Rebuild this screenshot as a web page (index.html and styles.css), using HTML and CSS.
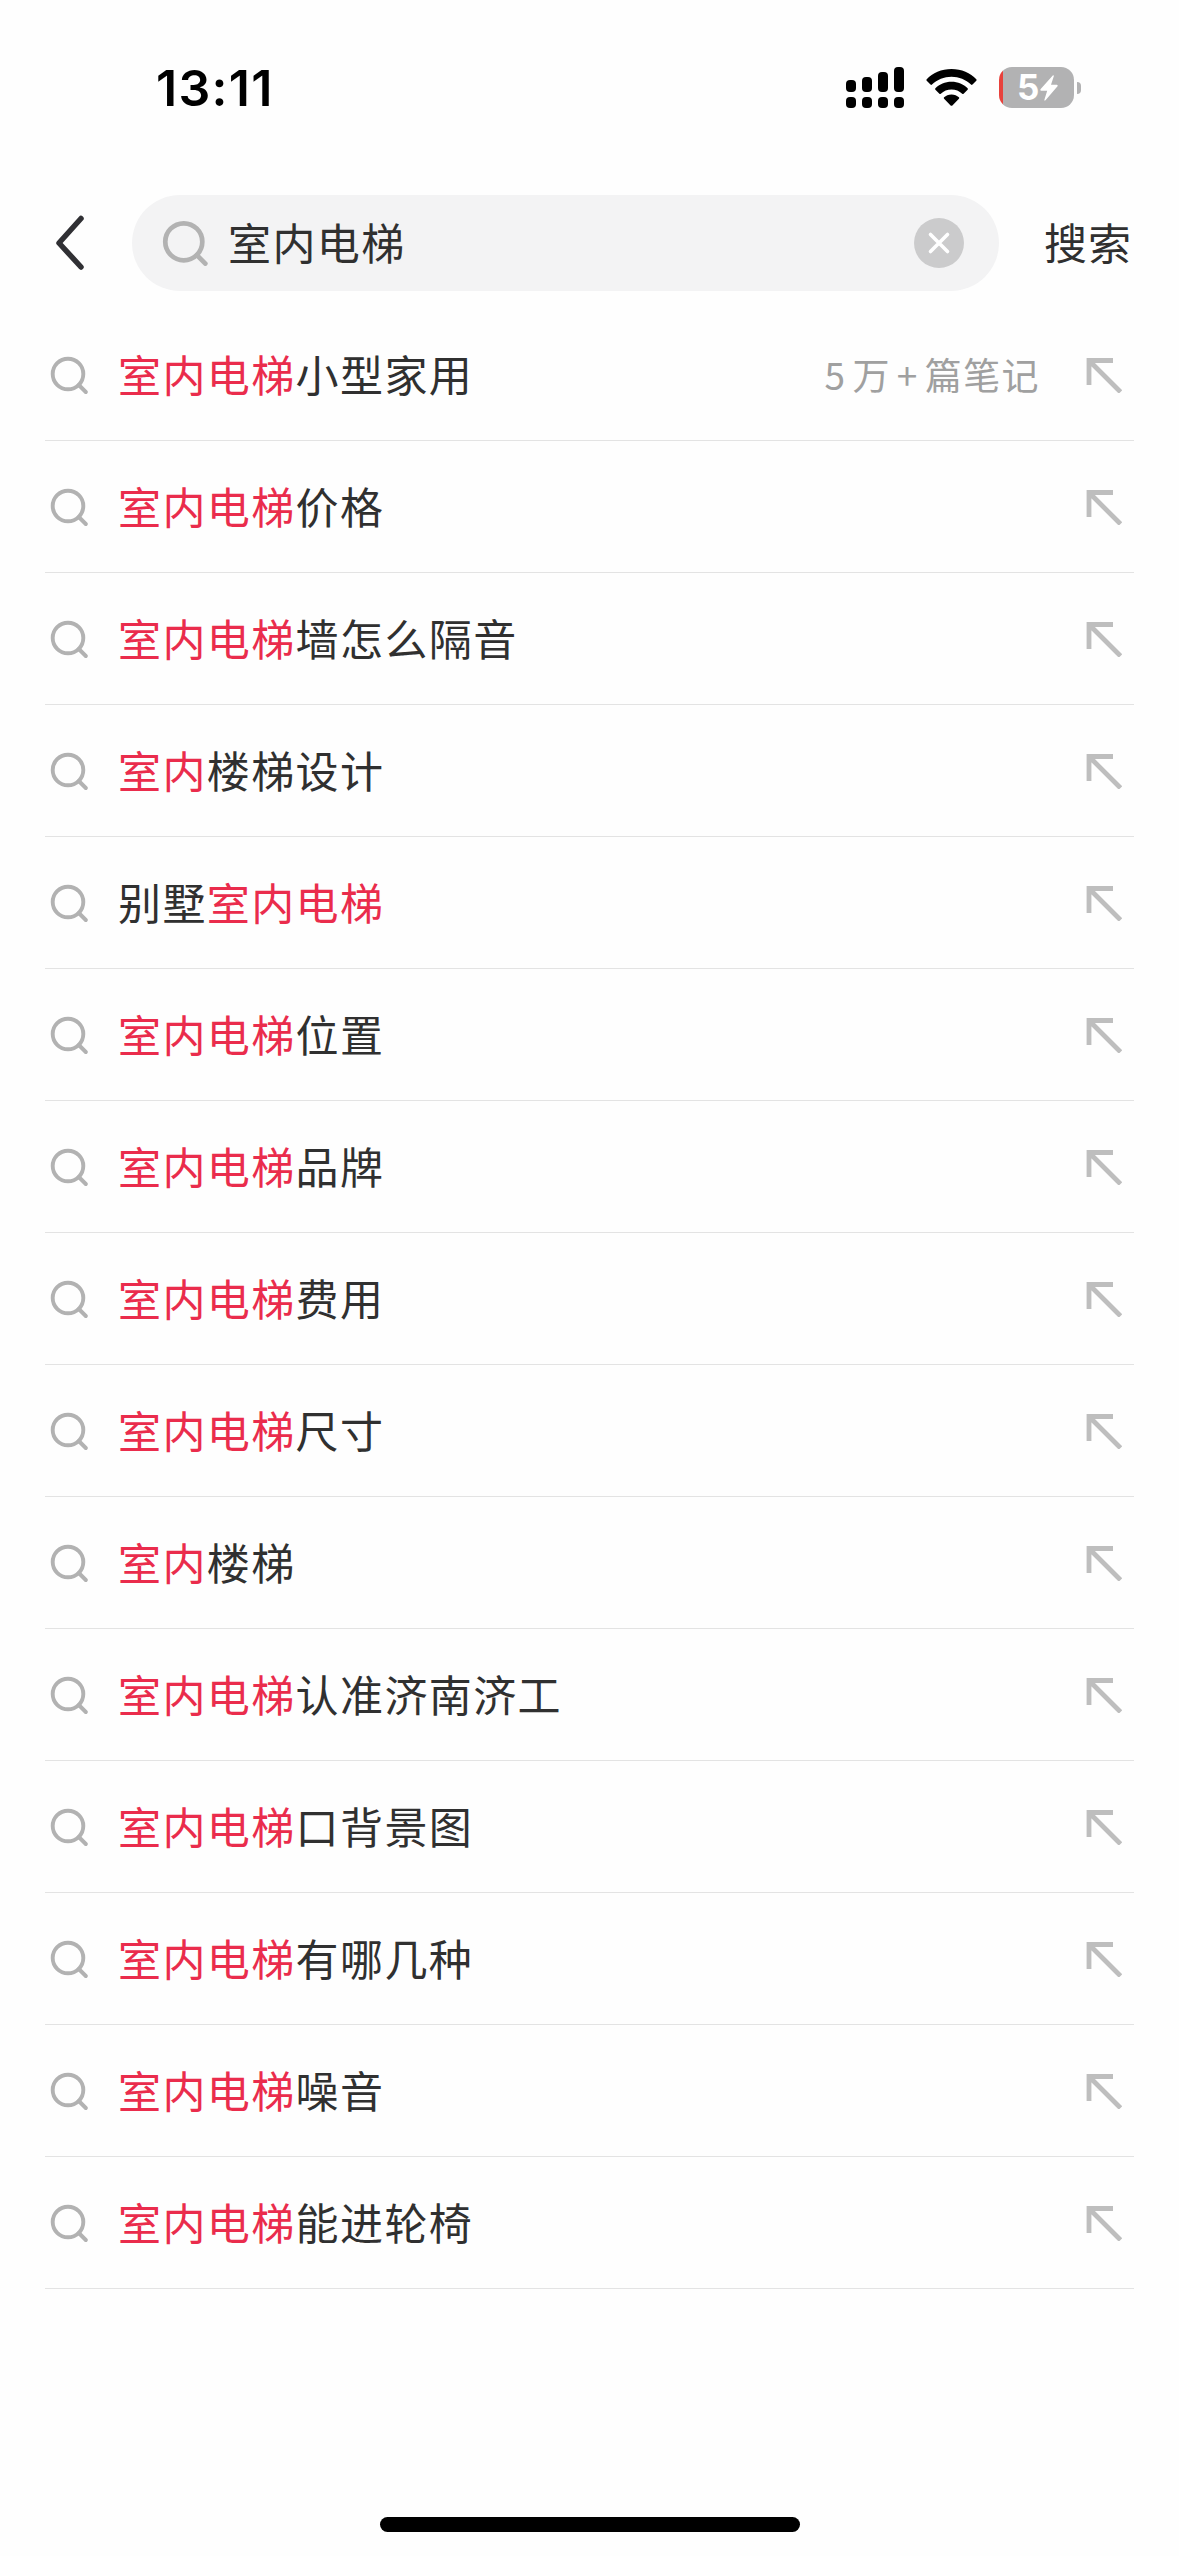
FILE: index.html
```html
<!DOCTYPE html>
<html lang="zh-CN">
<head>
<meta charset="utf-8">
<title>搜索</title>
<link rel="stylesheet" href="styles.css">
</head>
<body>
<svg class="sprite" aria-hidden="true">
  <symbol id="search" viewBox="0 0 38 38">
    <circle cx="18" cy="18" r="15.300"/><path d="M28.800 29L35.800 36"/>
  </symbol>
  <symbol id="fill" viewBox="0 0 36 36">
    <path d="M27 3.500H3V28M3 3.500L34.500 35"/>
  </symbol>
</svg>
<header class="status">
  <span class="time">13:11</span>
  <svg class="signal" width="58" height="41" viewBox="0 0 58 41">
    <rect x="0" y="13" width="10" height="12" rx="4"/><rect x="16" y="10" width="10" height="15" rx="4"/><rect x="32" y="5" width="10" height="20" rx="4"/><rect x="48" y="0" width="10" height="25" rx="4"/>
    <rect x="0" y="30" width="10" height="11" rx="4"/><rect x="16" y="30" width="10" height="11" rx="4"/><rect x="32" y="30" width="10" height="11" rx="4"/><rect x="48" y="30" width="10" height="11" rx="4"/>
  </svg>
  <svg class="wifi" width="51" height="38" viewBox="0 0 51 38">
    <path d="M25.500 0C35.500 0 44.500 4 50.300 10.200Q51 11 50.300 11.800L46.500 15.600Q45.700 16.300 45 15.600C39.800 10.600 33 7.800 25.500 7.800S11.200 10.600 6 15.600Q5.300 16.300 4.500 15.600L.7 11.800Q0 11 .7 10.200C6.500 4 15.500 0 25.500 0Z"/>
    <path d="M25.500 12.800C32 12.800 37.500 15.300 41.600 19.200Q42.300 20 41.600 20.800L37.600 24.700Q36.900 25.300 36.200 24.700C33.300 22 29.700 20.500 25.500 20.500S17.700 22 14.800 24.700Q14.100 25.300 13.400 24.700L9.400 20.800Q8.700 20 9.400 19.200C13.500 15.300 19 12.800 25.500 12.800Z"/>
    <path d="M25.500 25.500C28.600 25.500 31 26.600 32.900 28.300Q33.700 29 32.900 29.800L26.400 36.400Q25.500 37.200 24.600 36.400L18.100 29.800Q17.300 29 18.100 28.300C20 26.600 22.400 25.500 25.500 25.500Z"/>
  </svg>
  <div class="battery">
    <span class="level">5</span>
    <svg width="18" height="26" viewBox="0 0 18 26"><path d="M13 .3Q14 0 13.800 1.300L11 9.800H16.700Q18.300 10.200 17.300 11.600L5.500 25.300Q4.300 26.200 4.400 24.800L7.200 15.800H1.300Q-.3 15.400 .7 14Z"/></svg>
  </div>
  <span class="nub"></span>
</header>
<div class="bar">
  <svg class="back" width="30" height="56" viewBox="0 0 30 56"><path d="M26 3.500L4 28L26 52"/></svg>
  <div class="field">
    <svg class="glass" width="46" height="46"><use href="#search"/></svg>
    <span class="query">室内电梯</span>
    <svg class="clear" width="50" height="50" viewBox="0 0 50 50"><circle cx="25" cy="25" r="25"/><path d="M16.500 16.500L33.500 33.500M33.500 16.500L16.500 33.500"/></svg>
  </div>
  <span class="submit">搜索</span>
</div>
<ul class="list">
  <li><svg class="lens"><use href="#search"/></svg><span class="term"><em>室内电梯</em>小型家用</span><span class="count">5<b>万</b>+<b>篇笔记</b></span><svg class="arrow"><use href="#fill"/></svg></li>
  <li><svg class="lens"><use href="#search"/></svg><span class="term"><em>室内电梯</em>价格</span><svg class="arrow"><use href="#fill"/></svg></li>
  <li><svg class="lens"><use href="#search"/></svg><span class="term"><em>室内电梯</em>墙怎么隔音</span><svg class="arrow"><use href="#fill"/></svg></li>
  <li><svg class="lens"><use href="#search"/></svg><span class="term"><em>室内</em>楼梯设计</span><svg class="arrow"><use href="#fill"/></svg></li>
  <li><svg class="lens"><use href="#search"/></svg><span class="term">别墅<em>室内电梯</em></span><svg class="arrow"><use href="#fill"/></svg></li>
  <li><svg class="lens"><use href="#search"/></svg><span class="term"><em>室内电梯</em>位置</span><svg class="arrow"><use href="#fill"/></svg></li>
  <li><svg class="lens"><use href="#search"/></svg><span class="term"><em>室内电梯</em>品牌</span><svg class="arrow"><use href="#fill"/></svg></li>
  <li><svg class="lens"><use href="#search"/></svg><span class="term"><em>室内电梯</em>费用</span><svg class="arrow"><use href="#fill"/></svg></li>
  <li><svg class="lens"><use href="#search"/></svg><span class="term"><em>室内电梯</em>尺寸</span><svg class="arrow"><use href="#fill"/></svg></li>
  <li><svg class="lens"><use href="#search"/></svg><span class="term"><em>室内</em>楼梯</span><svg class="arrow"><use href="#fill"/></svg></li>
  <li><svg class="lens"><use href="#search"/></svg><span class="term"><em>室内电梯</em>认准济南济工</span><svg class="arrow"><use href="#fill"/></svg></li>
  <li><svg class="lens"><use href="#search"/></svg><span class="term"><em>室内电梯</em>口背景图</span><svg class="arrow"><use href="#fill"/></svg></li>
  <li><svg class="lens"><use href="#search"/></svg><span class="term"><em>室内电梯</em>有哪几种</span><svg class="arrow"><use href="#fill"/></svg></li>
  <li><svg class="lens"><use href="#search"/></svg><span class="term"><em>室内电梯</em>噪音</span><svg class="arrow"><use href="#fill"/></svg></li>
  <li><svg class="lens"><use href="#search"/></svg><span class="term"><em>室内电梯</em>能进轮椅</span><svg class="arrow"><use href="#fill"/></svg></li>
</ul>
<div class="home"></div>
</body>
</html>
```

FILE: styles.css
```css
* { box-sizing: border-box; }
body {
  margin: 0;
  width: 1179px;
  height: 2556px;
  display: flex;
  flex-direction: column;
  background: #fefefe;
  color: #303030;
  font-family: "Noto Sans CJK SC", sans-serif;
  font-size: 43px;
  letter-spacing: 1.4px;
  overflow: hidden;
}
svg { flex: none; display: block; }
.sprite { position: absolute; width: 0; height: 0; }

/* status bar */
.status {
  height: 175px;
  display: flex;
  align-items: center;
  padding: 0 98px 0 156px;
  color: #000;
}
.time {
  margin-right: auto;
  font: 600 50px/60px Inter, sans-serif;
  letter-spacing: 1.3px;
}
.wifi { margin: 0 22px 0 22px; }
.battery {
  width: 75px;
  height: 41px;
  border-radius: 13px;
  display: flex;
  align-items: center;
  padding-left: 18px;
  gap: 1px;
  background: linear-gradient(90deg, #e8423c 4px, #b2b2b3 4px);
}
.level {
  font: 700 35px/41px Inter, sans-serif;
  letter-spacing: 0;
  color: #fff;
}
.battery path { fill: #fff; }
.nub {
  width: 4px;
  height: 12px;
  margin-left: 3px;
  border-radius: 0 4px 4px 0;
  background: #b2b2b3;
}

/* search bar */
.bar {
  height: 134px;
  display: flex;
  align-items: flex-start;
  padding: 20px 0 0 55px;
}
.back { margin: 20px 47px 0 0; }
.back path {
  fill: none;
  stroke: #303034;
  stroke-width: 5.5;
  stroke-linecap: round;
  stroke-linejoin: round;
}
.field {
  width: 867px;
  height: 96px;
  border-radius: 48px;
  display: flex;
  align-items: center;
  padding: 0 35px 0 30px;
  background: #f3f3f4;
}
.glass { margin-right: 20px; }
.query { flex: 1; line-height: 92px; padding-bottom: 4px; }
.submit { margin-left: 45px; line-height: 92px; letter-spacing: 1px; }
.clear circle { fill: #cbcbcc; }
.clear path { stroke: #fff; stroke-width: 3.6; stroke-linecap: round; }

#search { fill: none; stroke: #b2b2b2; stroke-width: 3.9; stroke-linecap: round; }
.glass { stroke-width: 3.4; }
#fill { fill: none; stroke: #bebebe; stroke-width: 4.8; }

/* suggestions */
.list { list-style: none; margin: 0; padding: 0 45px; }
.list li {
  height: 132px;
  display: flex;
  align-items: center;
  padding: 0 12px 0 5px;
  border-bottom: 1px solid #e3e3e3;
}
.lens { width: 38px; height: 38px; margin-right: 30px; }
.term { flex: 1; line-height: 60px; padding-bottom: 3px; }
.term em { font-style: normal; color: #ea2c4c; }
.count {
  margin-right: 46px;
  padding-bottom: 2px;
  font-size: 37px;
  line-height: 60px;
  color: #a0a0a0;
}
.count b { font-weight: inherit; margin: 0 6px; }
.count b:last-child { margin-right: 0; }
.arrow { width: 36px; height: 36px; }

.home {
  width: 420px;
  height: 15px;
  border-radius: 8px;
  margin: auto auto 24px;
  background: #000;
}
```
